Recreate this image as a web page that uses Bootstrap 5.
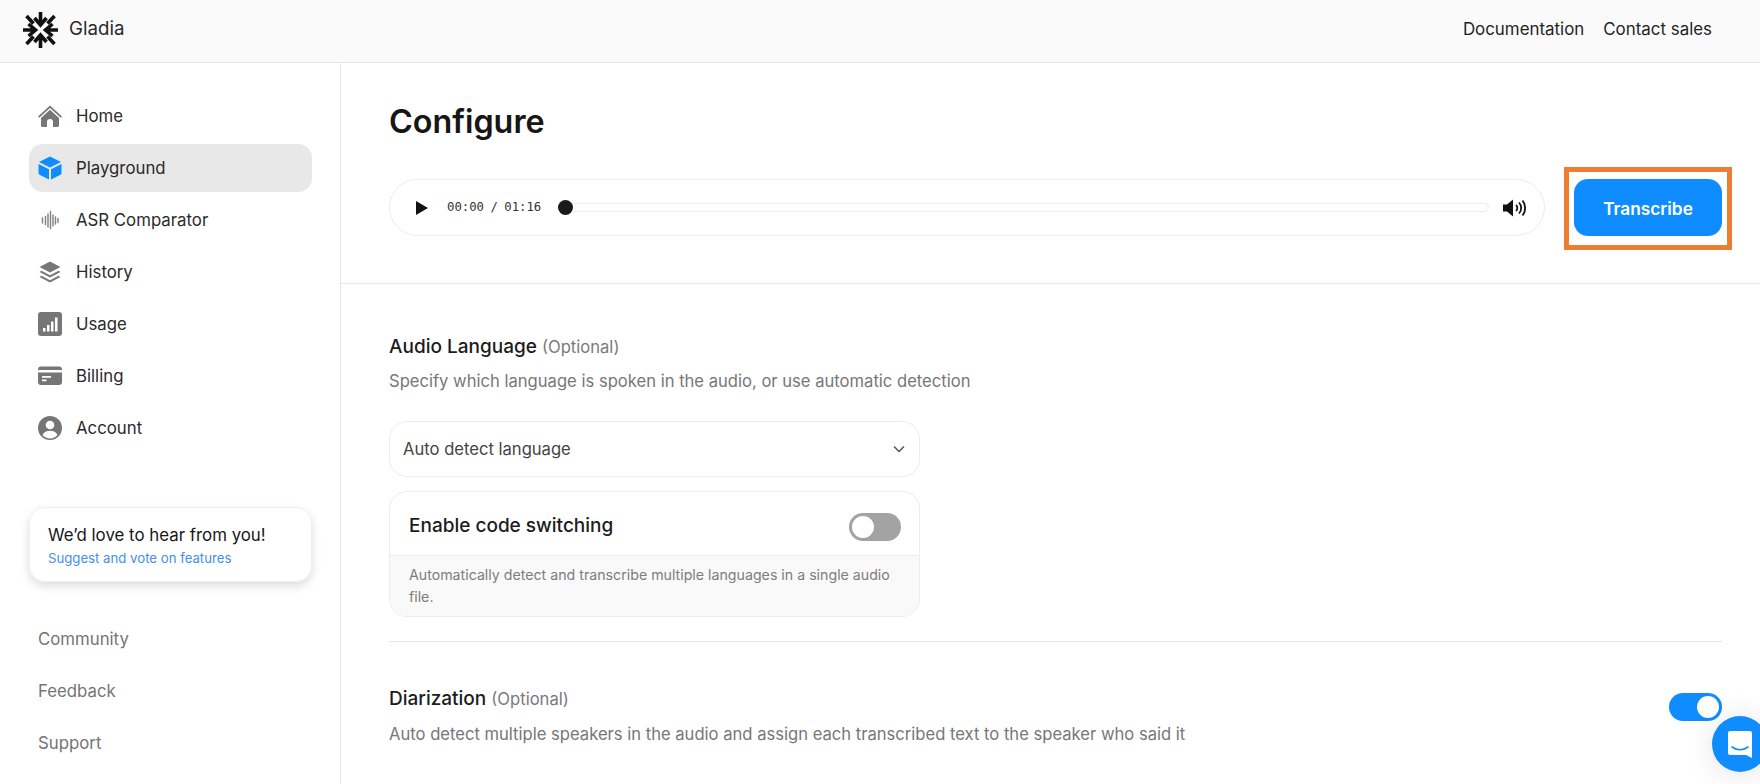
<!doctype html>
<html lang="en">
<head>
<meta charset="utf-8">
<title>Gladia</title>
<link href="https://cdn.jsdelivr.net/npm/bootstrap@5.3.0/dist/css/bootstrap.min.css" rel="stylesheet">
<style>
html,body{height:100%;}
body{font-family:Inter,"Liberation Sans",sans-serif;color:#1a1a1a;overflow:hidden;background:#fff;font-size:16.7px;}
.app-head{height:63px;background:#fafafa;border-bottom:1px solid #e8e8e8;padding:0 48px 3px 23px;}
.brand-name{font-size:18.7px;color:#2a2a2a;margin-left:11px;}
.head-link{color:#1f1f1f;text-decoration:none;font-size:16.9px;padding-top:1px;}
.head-links{gap:19px;}
.shell{height:721px;}
.side{width:341px;flex:none;border-right:1px solid #e8e8e8;padding:29px 28px 0 29px;}
.side-item{height:48px;margin-bottom:4px;border-radius:14px;padding-left:9px;color:#2a2a2a;text-decoration:none;font-size:16.8px;font-weight:400;}
.side-item svg{width:24px;height:24px;margin-right:14px;flex:none;}
.side-label{padding-top:1px;}
.side-item.on{background:#e8e8e8;}
.fb-card{margin-top:55px;height:75px;border:1px solid #efefef;border-radius:16px;box-shadow:0 4px 10px rgba(0,0,0,.14);padding:0 18px;}
.fb-title{font-size:16.85px;font-weight:400;line-height:24px;color:#161616;}
.fb-link{font-size:13.2px;line-height:18px;color:#3f8fee;text-decoration:none;display:block;margin-top:2px;}
.side-low{margin-top:34px;}
.side-low a{height:48px;margin-bottom:4px;padding-left:9px;color:#757575;text-decoration:none;font-size:16.8px;}
.main-col{min-width:0;}
.cfg-top{height:221px;border-bottom:1px solid #e8e8e8;padding:0 38px 0 48px;}
.cfg-title{font-size:32.3px;font-weight:600;line-height:40px;margin:0;padding-top:39px;height:116px;color:#161616;}
.player{height:57px;flex:1;border:1px solid #ececec;border-radius:29px;padding:0 17px 0 25px;margin-right:29px;}
.time{font-family:"DejaVu Sans Mono","Liberation Mono",monospace;font-size:12.3px;color:#333;margin:0 17px 0 18px;white-space:nowrap;word-spacing:-1px;}
.track{flex:1;height:9px;border:1px solid #ececec;border-radius:5px;position:relative;margin-right:14px;}
.knob{position:absolute;left:-1px;top:-4px;width:15px;height:15px;border-radius:50%;background:#1a1a1a;}
.go-wrap{position:relative;}
.go-btn{width:148px;height:57px;border-radius:14px;background:#0f8cff;border:0;color:#fff;font-weight:600;font-size:17.3px;padding-top:9px;}
.go-mark{position:absolute;left:-10px;right:-10px;top:-12px;bottom:-14px;border:5px solid #ed7d31;pointer-events:none;}
.cfg-body{padding:0 38px 0 48px;}
.sec-title{font-size:19px;font-weight:500;line-height:26px;color:#1c1c1c;}
.sec-title span{font-size:16.6px;font-weight:400;color:#7a7a7a;}
.sec-desc{font-size:16.6px;line-height:24px;color:#777;}
.lang-box{width:531px;height:56px;border:1px solid #ececec;border-radius:18px;padding:0 14px 0 13px;color:#444;font-size:16.6px;margin-top:28px;}
.switch-box{width:531px;margin-top:14px;border:1px solid #ececec;border-radius:18px;overflow:hidden;}
.switch-top{height:63px;padding:6px 18px 0 19px;font-size:19px;font-weight:500;color:#1c1c1c;}
.switch-note{background:#f9f9f9;border-top:1px solid #ececec;padding:8px 19px 8px;font-size:14.2px;line-height:22px;color:#7d7d7d;}
.pill{width:52px;height:28px;border-radius:14px;background:#a3a3a3;position:relative;flex:none;}
.pill::after{content:"";position:absolute;top:3px;left:3px;width:22px;height:22px;border-radius:50%;background:#fff;}
.pill.on{background:#0f8cff;width:53px;margin-top:7px;}
.pill.on::after{left:auto;right:3px;}
.rule{border-top:1px solid #e6e6e6;margin:24px 0 0;}
.chat-btn{position:fixed;left:1712px;top:716px;width:56px;height:56px;border-radius:50%;background:#0f8cff;box-shadow:0 2px 30px rgba(0,0,0,.12);}
</style>
</head>
<body>
<header class="app-head d-flex align-items-center justify-content-between">
  <div class="d-flex align-items-center">
    <svg width="35" height="36" viewBox="0 0 35 36" fill="none" stroke="#111" stroke-width="3.6">
      <path d="M17.500 0v12M11.500 6l6 7 6-7M17.500 36V24M11.500 30l6-7 6 7M0 18h12M5.500 12l7 6-7 6M35 18H23M29.500 12l-7 6 7 6M3.500 4l7 7.500M31.500 4l-7 7.500M3.500 32l7-7.500M31.500 32l-7-7.500"/>
    </svg>
    <span class="brand-name">Gladia</span>
  </div>
  <nav class="d-flex head-links">
    <a class="head-link" href="#">Documentation</a>
    <a class="head-link" href="#">Contact sales</a>
  </nav>
</header>
<div class="d-flex shell">
  <aside class="side">
    <a class="side-item d-flex align-items-center" href="#"><svg viewBox="0 0 24 24" fill="#767676"><path d="M12 1.500 0 12.500l1.200 1.300L12 4l10.800 9.800 1.200-1.300z"/><path d="M12 5.800 3 14v7.500a1.500 1.500 0 0 0 1.500 1.500H9v-5a3 3 0 0 1 6 0v5h4.500a1.500 1.500 0 0 0 1.500-1.500V14z"/></svg><span class="side-label">Home</span></a>
    <a class="side-item on d-flex align-items-center" href="#"><svg viewBox="0 0 24 24" fill="#0f8cff"><path d="M12 .5 23 6l-11 5.500L1 6z"/><path d="M.5 8 11 13.200v10.300L2 19a2.500 2.500 0 0 1-1.500-2.300zM23.500 8 13 13.200v10.300L22 19a2.500 2.500 0 0 0 1.500-2.300z"/></svg><span class="side-label">Playground</span></a>
    <a class="side-item d-flex align-items-center" href="#"><svg viewBox="0 0 24 24" fill="none" stroke="#808080" stroke-width="1.400" stroke-linecap="round"><path d="M4.500 10v5M7.500 8.500v8M10 6v13M12.500 3.500v17M15 7v11M17.500 9v7M20 10.500v4"/></svg><span class="side-label">ASR Comparator</span></a>
    <a class="side-item d-flex align-items-center" href="#"><svg viewBox="0 0 24 24" fill="#767676"><path d="M12 1.500 22.500 7 12 12.500 1.500 7z"/><path d="M3.500 10.800 12 15.200l8.500-4.400 2 1.200L12 17.500 1.500 12z"/><path d="M3.500 15.800 12 20.200l8.500-4.400 2 1.200L12 22.500 1.500 17z"/></svg><span class="side-label">History</span></a>
    <a class="side-item d-flex align-items-center" href="#"><svg viewBox="0 0 24 24"><rect width="24" height="24" y="0" rx="3" fill="#767676"/><path d="M5 16h2.500v3.500H5zM9 13h2.500v6.500H9zM13 9.500h2.500v10H13zM17 5.500h2.500v14H17z" fill="#fff"/></svg><span class="side-label">Usage</span></a>
    <a class="side-item d-flex align-items-center" href="#"><svg viewBox="0 0 24 24" fill="#767676"><path d="M3 2.500h18a3 3 0 0 1 3 3V6H0v-.5a3 3 0 0 1 3-3zM0 8.500h24V18a3 3 0 0 1-3 3H3a3 3 0 0 1-3-3z"/><path d="M4 12h9v1.800H4zM4 15.500h4.500v1.800H4z" fill="#fff"/></svg><span class="side-label">Billing</span></a>
    <a class="side-item d-flex align-items-center" href="#"><svg viewBox="0 0 24 24"><circle cx="12" cy="12" r="12" fill="#767676"/><circle cx="12" cy="9" r="4.300" fill="#fff"/><path d="M4.500 19c1.500-3 4-4.200 7.500-4.200s6 1.200 7.500 4.200a10 10 0 0 1-15 0z" fill="#fff"/></svg><span class="side-label">Account</span></a>
    <div class="fb-card d-flex flex-column justify-content-center">
      <div class="fb-title">We’d love to hear from you!</div>
      <a class="fb-link" href="#">Suggest and vote on features</a>
    </div>
    <div class="side-low">
      <a class="d-flex align-items-center" href="#">Community</a>
      <a class="d-flex align-items-center" href="#">Feedback</a>
      <a class="d-flex align-items-center" href="#">Support</a>
    </div>
  </aside>
  <main class="main-col flex-grow-1">
    <section class="cfg-top">
      <h1 class="cfg-title">Configure</h1>
      <div class="d-flex align-items-center">
        <div class="player d-flex align-items-center">
          <svg width="14" height="14" viewBox="0 0 14 14"><path d="M1 0v14l12-7z" fill="#111"/></svg>
          <span class="time">00:00 / 01:16</span>
          <div class="track"><span class="knob"></span></div>
          <svg width="24" height="20" viewBox="0 0 24 20" fill="none" stroke="#111" stroke-width="1.800"><path d="M0 6.500h4L10 1.500v17l-6-5H0z" fill="#111" stroke="none"/><path d="M13 7a4 4 0 0 1 0 6M16 4.500a8 8 0 0 1 0 11M19.500 2.500a12 12 0 0 1 0 15"/></svg>
        </div>
        <div class="go-wrap">
          <button class="go-btn btn" type="button">Transcribe</button>
          <span class="go-mark"></span>
        </div>
      </div>
    </section>
    <section class="cfg-body">
      <div class="sec-title" style="margin-top:50px">Audio Language <span>(Optional)</span></div>
      <div class="sec-desc" style="margin-top:9px">Specify which language is spoken in the audio, or use automatic detection</div>
      <div class="lang-box d-flex align-items-center justify-content-between">
        <span>Auto detect language</span>
        <svg width="12" height="8" viewBox="0 0 12 8" fill="none" stroke="#555" stroke-width="1.500"><path d="M1 1.500l5 5 5-5"/></svg>
      </div>
      <div class="switch-box">
        <div class="switch-top d-flex align-items-center justify-content-between">
          <span>Enable code switching</span>
          <span class="pill"></span>
        </div>
        <div class="switch-note">Automatically detect and transcribe multiple languages in a single audio file.</div>
      </div>
      <div class="rule"></div>
      <div class="d-flex justify-content-between" style="margin-top:44px">
        <div>
          <div class="sec-title">Diarization <span>(Optional)</span></div>
          <div class="sec-desc" style="margin-top:10px">Auto detect multiple speakers in the audio and assign each transcribed text to the speaker who said it</div>
        </div>
        <span class="pill on"></span>
      </div>
    </section>
  </main>
</div>
<div class="chat-btn d-flex align-items-center justify-content-center">
  <svg width="26" height="28" viewBox="0 0 26 28"><path d="M3 1h20a2 2 0 0 1 2 2v25l-6-3H3a2 2 0 0 1-2-2V3a2 2 0 0 1 2-2z" fill="#fff"/><path d="M5 17c5 3.500 11 3.500 16 0" fill="none" stroke="#0f8cff" stroke-width="1.600" stroke-linecap="round"/></svg>
</div>
<script src="https://cdn.jsdelivr.net/npm/bootstrap@5.3.0/dist/js/bootstrap.bundle.min.js"></script>
</body>
</html>
